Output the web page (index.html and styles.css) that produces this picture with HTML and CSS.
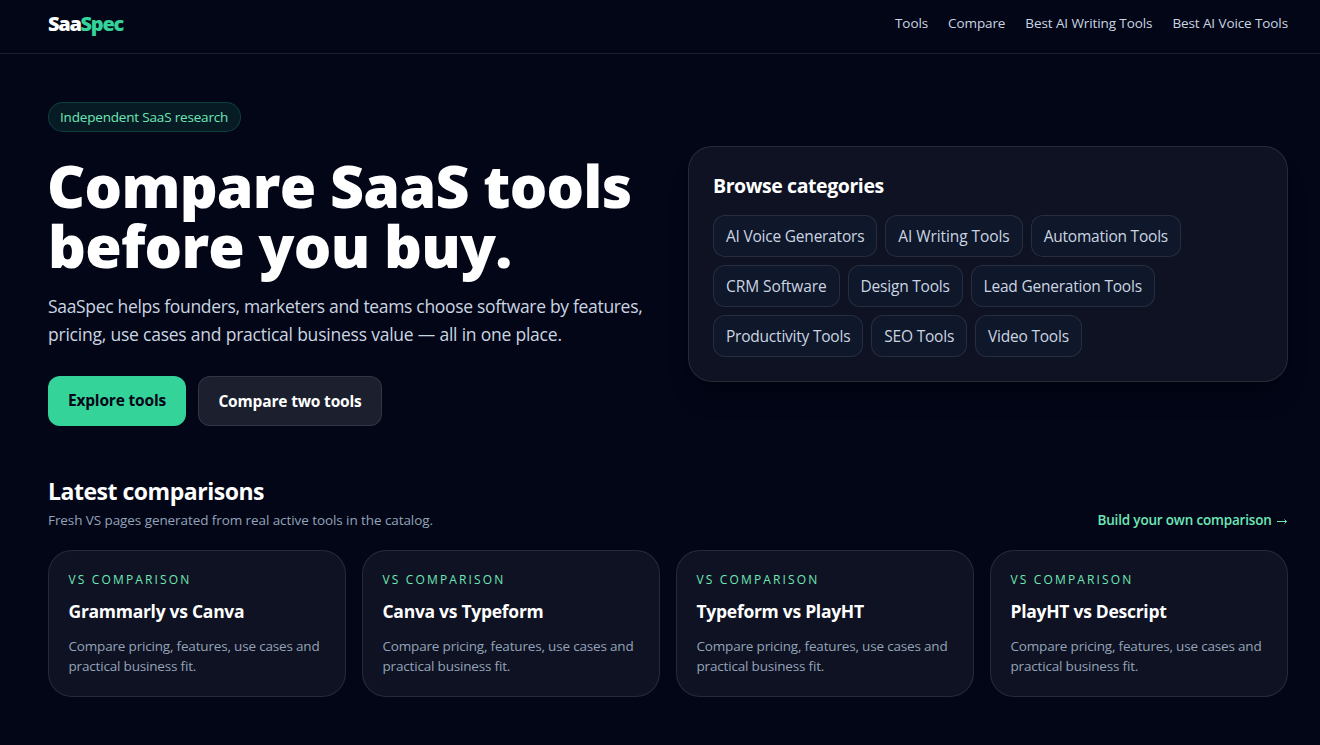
FILE: index.html
```html
<!DOCTYPE html>
<html lang="en">
<head>
    <meta charset="UTF-8">
    <meta name="viewport" content="width=device-width, initial-scale=1.0">
    <title>SaaSpec</title>
    <link rel="stylesheet" href="styles.css">
</head>
<body>
    <header class="header">
        <a href="#" class="logo">Saa<span>Spec</span></a>
        <nav class="nav">
            <a href="#">Tools</a>
            <a href="#">Compare</a>
            <a href="#">Best AI Writing Tools</a>
            <a href="#">Best AI Voice Tools</a>
        </nav>
    </header>
    <main class="container">
        <section class="hero">
            <div class="hero-text">
                <span class="badge">Independent SaaS research</span>
                <h1>Compare SaaS tools<br>before you buy.</h1>
                <p class="lead">SaaSpec helps founders, marketers and teams choose software by features,<br><span>pricing, use cases and practical business value — all in one place.</span></p>
                <div class="buttons">
                    <a href="#" class="button button-primary">Explore tools</a>
                    <a href="#" class="button button-secondary">Compare two tools</a>
                </div>
            </div>
            <div class="panel">
                <h2>Browse categories</h2>
                <div class="chips">
                    <a href="#">AI Voice Generators</a>
                    <a href="#" class="loose">AI Writing Tools</a>
                    <a href="#">Automation Tools</a>
                    <a href="#" class="loose">CRM Software</a>
                    <a href="#">Design Tools</a>
                    <a href="#">Lead Generation Tools</a>
                    <a href="#">Productivity Tools</a>
                    <a href="#">SEO Tools</a>
                    <a href="#">Video Tools</a>
                </div>
            </div>
        </section>
        <section class="latest">
            <div class="latest-head">
                <div>
                    <h2>Latest comparisons</h2>
                    <p>Fresh VS pages generated from real active tools in the catalog.</p>
                </div>
                <a href="#" class="build-link">Build your own comparison <svg class="arrow" viewBox="0 0 11 8"><path d="M0 4.5H9.5M7.5 2.5L9.5 4.5L7.5 6.5"/></svg></a>
            </div>
            <div class="cards">
                <a href="#" class="card">
                    <div class="card-label">VS comparison</div>
                    <h3>Grammarly vs Canva</h3>
                    <p>Compare pricing, features, use cases and practical business fit.</p>
                </a>
                <a href="#" class="card">
                    <div class="card-label">VS comparison</div>
                    <h3>Canva vs Typeform</h3>
                    <p>Compare pricing, features, use cases and practical business fit.</p>
                </a>
                <a href="#" class="card">
                    <div class="card-label">VS comparison</div>
                    <h3>Typeform vs PlayHT</h3>
                    <p>Compare pricing, features, use cases and practical business fit.</p>
                </a>
                <a href="#" class="card">
                    <div class="card-label">VS comparison</div>
                    <h3>PlayHT vs Descript</h3>
                    <p>Compare pricing, features, use cases and practical business fit.</p>
                </a>
            </div>
        </section>
    </main>
</body>
</html>
```
FILE: styles.css
```css
* {
    box-sizing: border-box;
    margin: 0;
    padding: 0;
}
body {
    font-family: "Segoe UI", "Open Sans", "Noto Sans", sans-serif;
    font-size: 15.5px;
    line-height: 24px;
    color: #fff;
    background: #020617;
}
a {
    color: inherit;
    text-decoration: none;
}
.header {
    display: flex;
    align-items: center;
    justify-content: space-between;
    height: 54px;
    padding: 10px 32px 15px 48px;
    border-bottom: 1px solid rgba(255, 255, 255, 0.1);
}
.logo {
    font-size: 20px;
    line-height: 28px;
    font-weight: 800;
    letter-spacing: -1.3px;
}
.logo span {
    color: #34d399;
}
.nav {
    display: flex;
    gap: 20px;
    padding-bottom: 2px;
    font-size: 13.5px;
    line-height: 20px;
    color: #cbd5e1;
    letter-spacing: -0.1px;
}
.container {
    padding: 48px 32px 48px 48px;
}
.hero {
    display: grid;
    grid-template-columns: 600px 600px;
    gap: 40px;
    align-items: center;
}
.badge {
    display: block;
    width: 193px;
    padding: 4px 0 4px 11px;
    border: 1px solid rgba(52, 211, 153, 0.2);
    border-radius: 15px;
    background: rgba(52, 211, 153, 0.1);
    color: #6ee7b7;
    font-size: 13.5px;
    line-height: 20px;
    letter-spacing: -0.18px;
    white-space: nowrap;
}
h1 {
    margin-top: 23px;
    font-size: 59px;
    line-height: 60px;
    font-weight: 800;
    letter-spacing: -0.75px;
    text-indent: -1px;
    white-space: nowrap;
}
.lead {
    margin-top: 17px;
    font-size: 17.5px;
    line-height: 28px;
    color: #cbd5e1;
    letter-spacing: -0.32px;
    white-space: nowrap;
}
.lead span {
    letter-spacing: -0.22px;
}
.buttons {
    display: flex;
    gap: 12px;
    margin-top: 28px;
}
.button {
    height: 50px;
    border-radius: 12px;
    font-weight: 700;
    line-height: 48px;
    letter-spacing: -0.17px;
    text-align: center;
}
.button-primary {
    width: 138px;
    background: #34d399;
    color: #020617;
}
.button-secondary {
    width: 184px;
    border: 1px solid rgba(255, 255, 255, 0.1);
    background: rgba(255, 255, 255, 0.1);
}
.panel {
    padding: 24px;
    border: 1px solid rgba(255, 255, 255, 0.1);
    border-radius: 24px;
    background: rgba(255, 255, 255, 0.05);
    box-shadow: 0 20px 25px -5px rgba(0, 0, 0, 0.2), 0 8px 10px -6px rgba(0, 0, 0, 0.2);
}
.panel h2 {
    padding-top: 1px;
    font-size: 19.5px;
    line-height: 28px;
    font-weight: 700;
    letter-spacing: -0.42px;
}
.chips {
    display: flex;
    flex-wrap: wrap;
    gap: 8px;
    margin-top: 15px;
}
.chips a {
    padding: 8px 12px;
    border: 1px solid rgba(255, 255, 255, 0.1);
    border-radius: 12px;
    background: #0f172a;
    color: #cbd5e1;
    letter-spacing: -0.22px;
}
.chips .loose {
    letter-spacing: -0.08px;
}
.latest {
    margin-top: 49px;
}
.latest-head {
    display: flex;
    align-items: flex-end;
    justify-content: space-between;
    font-size: 13.5px;
    line-height: 20px;
}
.latest-head h2 {
    font-size: 23px;
    line-height: 32px;
    font-weight: 700;
    letter-spacing: -0.48px;
}
.latest-head p {
    margin-top: 3px;
    color: #94a3b8;
    letter-spacing: -0.08px;
}
.build-link {
    color: #6ee7b7;
    font-weight: 600;
    letter-spacing: -0.18px;
}
.arrow {
    width: 11px;
    height: 8px;
    margin-left: 2px;
    fill: none;
    stroke: currentColor;
}
.cards {
    display: grid;
    grid-template-columns: repeat(4, 1fr);
    gap: 16px;
    margin-top: 20px;
}
.card {
    height: 147px;
    padding: 21px 20px 20px 19.5px;
    border: 1px solid rgba(255, 255, 255, 0.1);
    border-radius: 24px;
    background: rgba(255, 255, 255, 0.05);
}
.card-label {
    color: #6ee7b7;
    font-size: 12px;
    line-height: 16px;
    letter-spacing: 2.15px;
    text-transform: uppercase;
}
.card h3 {
    margin-top: 9px;
    font-size: 17.5px;
    line-height: 28px;
    font-weight: 700;
    letter-spacing: -0.28px;
}
.card p {
    margin-top: 11px;
    color: #94a3b8;
    font-size: 13.5px;
    line-height: 20px;
    letter-spacing: -0.18px;
}
```
